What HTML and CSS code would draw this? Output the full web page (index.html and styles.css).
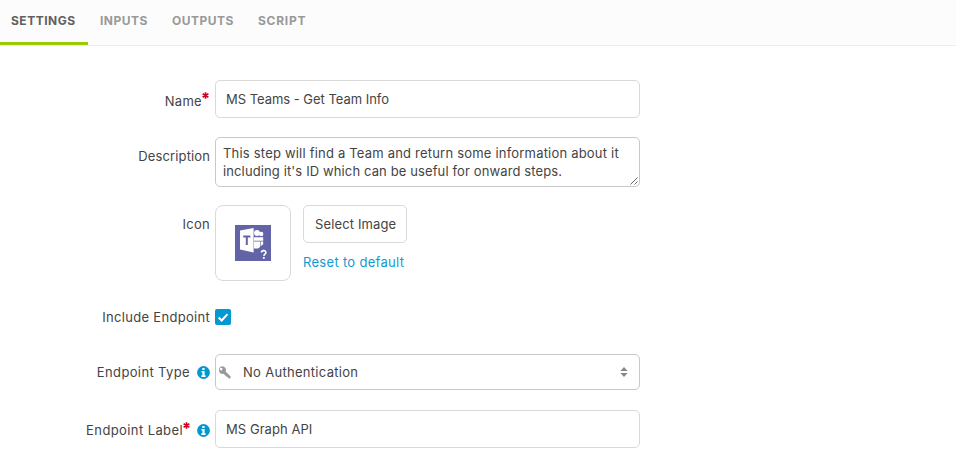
FILE: index.html
```html
<!DOCTYPE html>
<html lang="en">
<head>
<meta charset="utf-8">
<title>Step settings</title>
<link rel="stylesheet" href="styles.css">
</head>
<body>
<nav class="tabs">
  <a class="tab tab-settings active"><span>SETTINGS</span></a>
  <a class="tab tab-inputs"><span>INPUTS</span></a>
  <a class="tab tab-outputs"><span>OUTPUTS</span></a>
  <a class="tab tab-script"><span>SCRIPT</span></a>
</nav>
<main class="form">
  <div class="row row-name">
    <label class="label"><span class="t-name">Name</span><svg class="star" viewBox="0 0 7 7"><path d="M3.5 .2v6.6M.6 1.8l5.8 3.4M6.4 1.8L.6 5.2"/></svg></label>
    <div class="field input"><span class="t-team">MS Teams - Get Team Info</span></div>
  </div>
  <div class="row row-desc">
    <label class="label"><span class="t-desc">Description</span></label>
    <div class="field area">
      <div class="t-line1">This step will find a Team and return some information about it</div>
      <div class="t-line2">including it's ID which can be useful for onward steps.</div>
      <svg class="grip" viewBox="0 0 8 8"><path d="M.5 7.5l7-7M4.5 7.5l3-3"/></svg>
    </div>
  </div>
  <div class="row row-icon">
    <label class="label"><span class="t-icon">Icon</span></label>
    <div class="picker">
      <div class="preview">
        <svg width="36" height="36" viewBox="0 0 36 36">
          <path fill="#6264a7" d="M0 0h36v36H0z"/>
          <g fill="#fff">
            <circle cx="22" cy="8" r="3"/><circle cx="26.2" cy="9" r="2.2"/>
            <path d="M19 12.2h9.2v3.6H19zM19 16.6h6v5.4l-2 1.5h-4zM25.6 16.6h2.6v2.6l-2.6 2z"/>
          </g>
          <path fill="#fff" d="M5 5.6L18.6 3v24.5L5 24.5z"/>
          <path stroke="#6264a7" stroke-width="2" fill="none" d="M8.2 11.6h7.2M11.8 11v9"/>
          <path stroke="#fff" stroke-width="1.6" fill="none" d="M26.4 27.5c.2-2.7 4.8-2.3 4.5.2-.2 1.4-2 1.5-2.1 3.2"/>
          <path fill="#fff" d="M27.9 32h1.8v1.8h-1.8z"/>
        </svg>
      </div>
      <div class="actions">
        <button class="select-image"><span class="t-select">Select Image</span></button>
        <a class="reset"><span class="t-reset">Reset to default</span></a>
      </div>
    </div>
  </div>
  <div class="row row-check">
    <label class="label"><span class="t-include">Include Endpoint</span></label>
    <div class="checkbox"><svg viewBox="0 0 16 16"><path d="M3.7 8.4l3 3 5.8-6.3"/></svg></div>
  </div>
  <div class="row row-type">
    <label class="label"><span class="t-type">Endpoint Type</span><svg class="info" viewBox="0 0 13 13"><circle cx="6.5" cy="6.5" r="6.4"/><path d="M5.3 2h2.3v2H5.3zM4.5 5h3.1v4.2h1V11H4.4V9.2h1V6.6h-.9z"/></svg></label>
    <div class="field select">
      <svg class="key" viewBox="0 0 13 13"><path fill-rule="evenodd" d="M4.2.3a3.8 3.8 0 0 1 3.5 5.3l4.9 4.9v1.3l-.9.9-1-.2-.4-1-.9.1-.1-.9-1-.1-2.8-2.8A3.8 3.8 0 1 1 4.2.3zM3.2 1.8a1.3 1.3 0 1 0 0 2.6 1.3 1.3 0 0 0 0-2.6z"/></svg>
      <span class="t-auth">No Authentication</span>
      <svg class="sort" viewBox="0 0 8 10"><path d="M.3 4L4 0l3.7 4zM.3 6h7.4L4 10z"/></svg>
    </div>
  </div>
  <div class="row row-label">
    <label class="label"><span class="t-label">Endpoint Label</span><svg class="star" viewBox="0 0 7 7"><path d="M3.5 .2v6.6M.6 1.8l5.8 3.4M6.4 1.8L.6 5.2"/></svg><svg class="info" viewBox="0 0 13 13"><circle cx="6.5" cy="6.5" r="6.4"/><path d="M5.3 2h2.3v2H5.3zM4.5 5h3.1v4.2h1V11H4.4V9.2h1V6.6h-.9z"/></svg></label>
    <div class="field input"><span class="t-graph">MS Graph API</span></div>
  </div>
</main>
</body>
</html>
```
FILE: styles.css
```css
* { box-sizing: border-box; }
body {
  margin: 0;
  background: #fff;
  color: #444;
  font: 13px/18px Inter, "Liberation Sans", sans-serif;
  letter-spacing: 0.3px;
  white-space: nowrap;
  overflow: hidden;
}
svg { display: block; flex: none; }
.tabs {
  display: flex;
  height: 46px;
  background: #fcfcfc;
  border-bottom: 1px solid #ececec;
}
.tab {
  height: 45px;
  padding: 12px 0 0 12px;
  font-size: 12px;
  font-weight: 700;
  letter-spacing: 0.5px;
  color: #999;
}
.tab-settings { width: 88px; padding-left: 11px; }
.tab-inputs { width: 72px; }
.tab-outputs { width: 86px; }
.tab-script { letter-spacing: 0.75px; }
.active { color: #606060; border-bottom: 3px solid #9c0; }

.form { padding-top: 34px; }
.row { display: grid; grid-template-columns: 210px 425px; column-gap: 5px; align-items: start; }
.label { display: flex; justify-content: flex-end; }
.field { border: 1px solid #d9d9d9; border-radius: 5px; background: #fff; }
.input { height: 38px; padding: 9px 10px; }
.row-name .label, .row-label .label { padding-top: 11px; }
.row-name .label { padding-right: 1px; }
.t-name { padding-top: 1px; }
.t-team { letter-spacing: -0.03px; }
.t-desc { letter-spacing: 0.12px; }
.t-line1 { letter-spacing: 0.2px; }
.t-line2 { letter-spacing: 0.12px; }
.t-select { letter-spacing: 0.13px; }
.t-graph { letter-spacing: 0.05px; }
.t-label { letter-spacing: 0.4px; }
.t-type { letter-spacing: 0.37px; }
.star { width: 7px; height: 7px; margin-top: 1px; stroke: #d0021b; stroke-width: 1.6; fill: none; }
.row-desc { margin-top: 19px; }
.row-desc .label { padding-top: 10px; }
.area { position: relative; height: 50px; padding: 6px 7px; border-color: #c8c8c8; }
.grip { position: absolute; right: 1px; bottom: 1px; width: 8px; height: 8px; stroke: #666; stroke-width: 1; }
.row-icon { margin-top: 18px; }
.row-icon .label { padding-top: 10px; }
.picker { display: flex; gap: 12px; }
.preview {
  display: grid;
  place-items: center;
  width: 76px;
  height: 76px;
  border: 1px solid #d9d9d9;
  border-radius: 8px;
}
.select-image {
  display: block;
  width: 104px;
  height: 38px;
  padding: 0 0 0 11px;
  border: 1px solid #d9d9d9;
  border-radius: 5px;
  background: #fff;
  color: inherit;
  font: inherit;
  letter-spacing: inherit;
  text-align: left;
}
.reset { display: block; margin-top: 10px; color: #0f9bd0; }
.row-check { margin-top: 27px; }
.checkbox { width: 16px; height: 16px; margin-top: 1px; border-radius: 2px; background: #0099d1; }
.checkbox path { fill: none; stroke: #fff; stroke-width: 2.1; }
.row-type { margin-top: 28px; }
.row-type .label { padding-top: 9px; }
.info { width: 13px; height: 13px; margin: 3px 0 0 7px; fill: #0099d1; }
.info path { fill: #fff; }
.select { display: flex; align-items: center; height: 36px; padding: 0 11px 0 2px; border-color: #c8c8c8; }
.key { width: 13px; height: 13px; margin-right: 12px; fill: #999; }
.sort { width: 8px; height: 10px; margin-left: auto; fill: #888; }
.row-label { margin-top: 20px; }
```
